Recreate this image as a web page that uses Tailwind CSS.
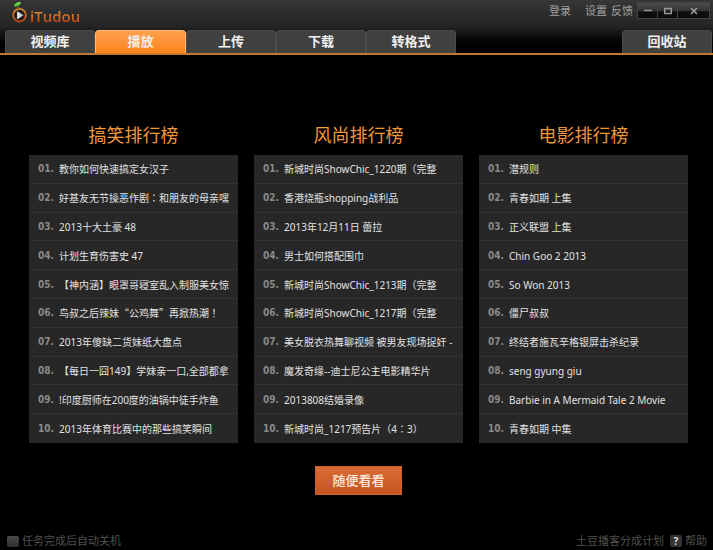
<!-- index.html -->
<!DOCTYPE html>
<html lang="zh-CN">
<head>
  <meta charset="UTF-8" />
  <meta name="viewport" content="width=device-width, initial-scale=1">
  <title>iTudou - 播放</title>
  <script src="https://cdn.jsdelivr.net/npm/@tailwindcss/browser@4"></script>
</head>
<body class="min-h-screen flex flex-col bg-black text-[#e2e2e2] font-['Noto_Sans','Noto_Sans_CJK_SC',sans-serif]">
  <!-- Header Section -->
  <header class="bg-linear-to-b from-[#363636] via-[#242424] via-50% to-black border-b-2 border-[#c47832]">
    <div class="flex justify-between h-[30px]">
      <a href="#" class="flex items-start pl-3">
        <svg class="w-4 h-[23px]" viewBox="0 0 16 23" fill="none">
          <defs>
            <linearGradient id="ring" x1="0" y1="8" x2="0" y2="22" gradientUnits="userSpaceOnUse">
              <stop offset="0" stop-color="#d98a2c" />
              <stop offset="1" stop-color="#b8431c" />
            </linearGradient>
            <linearGradient id="play" x1="5" y1="0" x2="12" y2="0" gradientUnits="userSpaceOnUse">
              <stop offset="0" stop-color="#ffffff" />
              <stop offset="1" stop-color="#8c9aa6" />
            </linearGradient>
          </defs>
          <circle cx="7.5" cy="15.2" r="6.3" fill="#1c1a19" stroke="url(#ring)" stroke-width="1.8" />
          <path d="M5.2 11.2L11.8 15.2L5.2 19.2Z" fill="url(#play)" />
          <path d="M2 6.5C2.200 3.500 4.500 1.800 9.200 2C8.800 5 6 7 2 6.500Z" fill="#4fbf2a" />
          <path d="M3.500 5.200C4.500 3.700 6 3 8 2.800" stroke="#c4f29a" stroke-width="0.8" />
          <path d="M6 6.500L7 9" stroke="#8d7a24" stroke-width="1.200" />
        </svg>
        <h1 class="pl-0.5 pt-1.5 text-[15px] leading-5 font-semibold font-['Open_Sans',sans-serif] bg-linear-to-b from-[#e5a23a] from-30% to-[#bf3d16] to-90% bg-clip-text text-transparent">iTudou</h1>
      </a>
      <div class="flex items-start pr-[3px]">
        <div class="flex pt-1 pr-1 text-[11px] leading-[14px] text-[#a0a0a0]">
          <a href="#" class="mr-3.5">登录</a>
          <a href="#" class="mr-1">设置</a>
          <a href="#">反馈</a>
        </div>
        <!-- Window buttons -->
        <div class="mt-0.5 flex h-[17px] border border-[#464646] bg-linear-to-b from-[#484848] from-10% via-[#343434] via-50% to-[#0d0d0d] to-60% text-[#999]">
          <button aria-label="最小化" class="w-5 flex items-center justify-center border-r border-[#444]">
            <svg class="w-2 h-2" viewBox="0 0 8 8"><path d="M0 3.500H8" stroke="currentColor" stroke-width="1.500" /></svg>
          </button>
          <button aria-label="最大化" class="w-5 flex items-center justify-center border-r border-[#444]">
            <svg class="w-2 h-2" viewBox="0 0 8 8"><path d="M0.750 1.500H7.250V6.500H0.750Z" fill="none" stroke="currentColor" stroke-width="1.500" /></svg>
          </button>
          <button aria-label="关闭" class="w-[31px] flex items-center justify-center">
            <svg class="w-2 h-2" viewBox="0 0 8 8"><path d="M1 1L7 7M7 1L1 7" stroke="currentColor" stroke-width="1.700" /></svg>
          </button>
        </div>
      </div>
    </div>

    <!-- Navigation Section -->
    <nav class="flex justify-between h-[23px] pl-[5px] pr-px text-[13px] leading-5 font-bold text-[#f0f0f0]">
      <ul class="flex">
        <li class="w-[90px]"><a href="#" class="block h-full text-center bg-[#404040] border border-b-0 border-[#4c4c4c] rounded-t-sm">视频库</a></li>
        <li class="w-[91px]"><a href="#" class="block h-full text-center bg-linear-to-b from-[#ffa04c] to-[#fb8417] border border-b-0 border-[#ffb878] rounded-t-sm">播放</a></li>
        <li class="w-[90px]"><a href="#" class="block h-full text-center bg-[#404040] border border-b-0 border-[#4c4c4c] rounded-t-sm">上传</a></li>
        <li class="w-[90px]"><a href="#" class="block h-full text-center bg-[#404040] border border-b-0 border-[#4c4c4c] rounded-t-sm">下载</a></li>
        <li class="w-[90px]"><a href="#" class="block h-full text-center bg-[#404040] border border-b-0 border-[#4c4c4c] rounded-t-sm">转格式</a></li>
      </ul>
      <a href="#" class="block w-[90px] h-full text-center bg-[#404040] border border-b-0 border-[#4c4c4c] rounded-t-sm">回收站</a>
    </nav>
  </header>

  <main class="flex-1 flex flex-col items-center pt-[66px] pl-[29px] pr-[25px]">
    <div class="w-full grid grid-cols-3 gap-4">
      <!-- Funny -->
      <section>
        <h2 class="h-[34px] text-center text-[18px] leading-7 text-[#f0983c]">搞笑排行榜</h2>
        <ol id="funnyList" class="grid grid-rows-10 h-72 bg-[#272727] divide-y divide-[#333]"></ol>
      </section>
      <!-- Fashion -->
      <section>
        <h2 class="h-[34px] text-center text-[18px] leading-7 text-[#f0983c]">风尚排行榜</h2>
        <ol id="fashionList" class="grid grid-rows-10 h-72 bg-[#272727] divide-y divide-[#333]"></ol>
      </section>
      <!-- Movies -->
      <section>
        <h2 class="h-[34px] text-center text-[18px] leading-7 text-[#f0983c]">电影排行榜</h2>
        <ol id="movieList" class="grid grid-rows-10 h-72 bg-[#272727] divide-y divide-[#333]"></ol>
      </section>
    </div>
    <button class="mt-[23px] w-[87px] h-[29px] bg-linear-to-b from-[#d96c35] to-[#c55520] border border-[#c96230] text-[13px] font-medium text-[#fbe9dd]">随便看看</button>
  </main>

  <footer class="flex items-center justify-between h-[18px] pl-[7px] pr-1.5 text-[11px] leading-4 text-[#505050]">
    <label class="flex items-center gap-[3px]">
      <input type="checkbox" class="appearance-none w-3 h-[11px] rounded-xs bg-linear-to-b from-[#4c4c4c] to-[#2e2e2e]">
      任务完成后自动关机
    </label>
    <div class="flex items-center">
      <a href="#" class="mr-1.5">土豆播客分成计划</a>
      <a href="#" class="flex items-center gap-[3px]">
        <span class="w-3 h-3 rounded-xs bg-[#333] text-center text-[10px] leading-3 font-bold text-[#ddd]">?</span>
        帮助
      </a>
    </div>
  </footer>

  <script>
    const lists = {
      funnyList: [
        '教你如何快速搞定女汉子',
        '好基友无节操恶作剧：和朋友的母亲嘿',
        '2013十大土豪 48',
        '计划生育伤害史 47',
        '【神内涵】眼罩哥寝室乱入制服美女惊',
        '鸟叔之后辣妹“公鸡舞”再掀热潮！',
        '2013年傻缺二货妹纸大盘点',
        '【每日一囧149】学妹亲一口,全部都拿',
        '!印度厨师在200度的油锅中徒手炸鱼',
        '2013年体育比赛中的那些搞笑瞬间'
      ],
      fashionList: [
        '新城时尚ShowChic_1220期（完整',
        '香港烧瓶shopping战利品',
        '2013年12月11日 蕾拉',
        '男士如何搭配围巾',
        '新城时尚ShowChic_1213期（完整',
        '新城时尚ShowChic_1217期（完整',
        '美女脱衣热舞聊视频 被男友现场捉奸 -',
        '魔发奇缘--迪士尼公主电影精华片',
        '2013808结婚录像',
        '新城时尚_1217预告片（4：3）'
      ],
      movieList: [
        '潜规则',
        '青春如期 上集',
        '正义联盟 上集',
        'Chin Goo 2 2013',
        'So Won 2013',
        '僵尸叔叔',
        '终结者施瓦辛格银屏击杀纪录',
        'seng gyung giu',
        'Barbie in A Mermaid Tale 2 Movie',
        '青春如期 中集'
      ]
    };

    // full-width quotes, centred colon / exclamation mark / brackets
    const punctuate = (title) => title
      .replace(/[“”]/g, `<span class="font-['Noto_Sans_CJK_SC',sans-serif]">$&</span>`)
      .replace(/[：！（）]/g, `<span lang="zh-TW" class="font-['Noto_Sans_CJK_TC',sans-serif]">$&</span>`);

    for (const id in lists) {
      document.getElementById(id).innerHTML = lists[id].map((title, i) => `
        <li class="flex items-center pl-[9px] pt-px text-[10px] leading-4">
          <span class="w-[21px] font-bold text-[#8a8a8a] font-['DejaVu_Sans_Condensed','DejaVu_Sans',sans-serif]">${String(i + 1).padStart(2, '0')}.</span>
          <a href="#" class="whitespace-nowrap">${punctuate(title)}</a>
        </li>`).join('');
    }
  </script>
</body>
</html>
